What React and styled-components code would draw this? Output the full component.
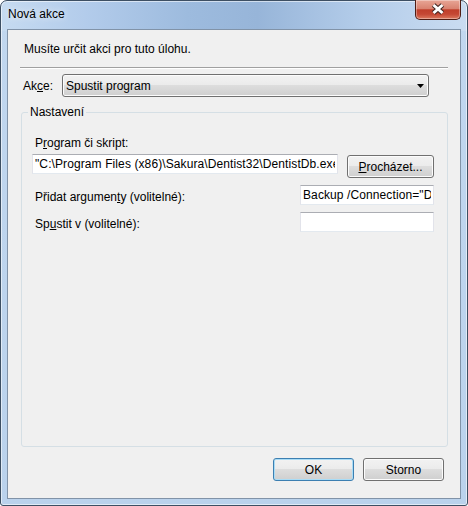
import React from 'react';
import styled, { createGlobalStyle } from 'styled-components';

const GlobalStyle = createGlobalStyle`
  html, body {
    margin: 0;
    padding: 0;
    background: #fff;
  }

  body {
    font-family: "Liberation Sans", Arial, sans-serif;
    font-size: 12px;
    color: #000;
  }
`;

const Window = styled.div`
  box-sizing: border-box;
  width: 468px;
  height: 506px;
  display: flex;
  flex-direction: column;
  padding: 0 6px 6px;
  border: 1px solid #3d4f63;
  border-radius: 7px 7px 3px 3px;
  background:
    linear-gradient(to right, #c6dbf1 0%, #b3cceb 18%, #9dbbde 40%, #97b5d9 55%, #b4cdea 78%, #cadcf1 100%) top / 100% 30px no-repeat,
    linear-gradient(to bottom, #c1d7ef, #bad2ec);
  box-shadow: inset 0 0 0 1px rgba(255, 255, 255, 0.55);
`;

const TitleBar = styled.div`
  height: 28px;
  flex: 0 0 28px;
  display: flex;
  justify-content: space-between;
  align-items: flex-start;
`;

const Caption = styled.div`
  padding: 6px 0 0 1px;
  line-height: 15px;
  text-shadow: 0 0 6px rgba(255, 255, 255, 0.9);
`;

const CloseButton = styled.div`
  box-sizing: border-box;
  width: 46px;
  height: 20px;
  margin-top: -1px;
  border: 1px solid #4f1d14;
  border-top: none;
  border-radius: 0 0 5px 5px;
  background: linear-gradient(to bottom, #e8a696 0%, #d98371 45%, #c03f2b 52%, #c54834 75%, #dc7a5f 100%);
  box-shadow: inset 0 0 0 1px rgba(255, 255, 255, 0.35);

  svg {
    display: block;
  }
`;

const Client = styled.div`
  box-sizing: border-box;
  flex: 1;
  display: flex;
  flex-direction: column;
  padding: 12px 12px 17px;
  border: 1px solid #8193a8;
  background: #f0f0f0;
`;

const Instruction = styled.div`
  margin-left: 4px;
  line-height: 15px;
`;

const Separator = styled.div`
  margin-top: 10px;
  border-top: 1px solid #a0a0a0;
  border-bottom: 1px solid #fff;
`;

const AkceRow = styled.div`
  display: flex;
  align-items: center;
  margin-top: 5px;
  padding-left: 3px;
`;

const AkceLabel = styled.span`
  flex: 0 0 39px;
`;

const ComboBox = styled.div`
  box-sizing: border-box;
  width: 367px;
  height: 23px;
  display: flex;
  align-items: center;
  justify-content: space-between;
  padding: 0 4px 0 3px;
  border: 1px solid #707070;
  border-radius: 3px;
  background: linear-gradient(to bottom, #f2f2f2 0%, #ebebeb 49%, #dddddd 50%, #cfcfcf 100%);
  box-shadow: inset 0 0 0 1px #fcfcfc;
`;

const GroupBox = styled.fieldset`
  flex: 1;
  min-height: 0;
  margin: 7px 0 0 1px;
  padding: 0;
  border: 1px solid #d5dfe5;
  border-radius: 3px;
`;

const Legend = styled.legend`
  margin-left: 6px;
  padding: 0 2px;
  line-height: 16px;
`;

const GroupBody = styled.div`
  display: flex;
  flex-direction: column;
  padding: 16px 13px 0 10px;
`;

const FieldLabel = styled.span`
  margin: ${(p) => p.$drop || 0}px 0 0 3px;
  line-height: 15px;
`;

const FieldRow = styled.div`
  display: flex;
  align-items: flex-start;
  justify-content: space-between;
  margin-top: ${(p) => p.$gap}px;
`;

const TextBox = styled.input`
  box-sizing: border-box;
  width: ${(p) => p.$width}px;
  height: 20px;
  margin: 0;
  padding: 0 2px;
  border: 1px solid #e2e3ea;
  border-top-color: #abadb3;
  border-bottom-color: #e3e9ef;
  background: #fff;
  font: inherit;
  letter-spacing: 0.1px;
  color: #000;
  outline: none;
`;

const PushButton = styled.div`
  box-sizing: border-box;
  width: ${(p) => p.$width}px;
  height: 23px;
  margin-top: ${(p) => p.$offset || 0}px;
  display: flex;
  align-items: center;
  justify-content: center;
  border: 1px solid ${(p) => (p.$default ? '#3c7fb1' : '#707070')};
  border-radius: 3px;
  background: linear-gradient(to bottom, #f2f2f2 0%, #ebebeb 49%, #dddddd 50%, #cfcfcf 100%);
  box-shadow: inset 0 0 0 1px ${(p) => (p.$default ? '#a9dcf6' : '#fcfcfc')};
`;

const ButtonBar = styled.div`
  display: flex;
  justify-content: flex-end;
  gap: 9px;
  margin-top: 11px;
  padding-right: 4px;
`;

const Key = styled.span`
  text-decoration: underline;
`;

function CloseGlyph() {
  return (
    <svg width="44" height="19" viewBox="0 0 44 19">
      <path d="M17.5 5 L26.5 13 M26.5 5 L17.5 13" stroke="#3f2420" strokeWidth="5" fill="none" />
      <path d="M17.5 5 L26.5 13 M26.5 5 L17.5 13" stroke="#fff" strokeWidth="3" fill="none" />
    </svg>
  );
}

function ComboArrow() {
  return (
    <svg width="7" height="4" viewBox="0 0 7 4">
      <path d="M0 0 H7 L3.5 4 Z" fill="#000" />
    </svg>
  );
}

export default function App() {
  return (
    <>
      <GlobalStyle />
      <Window>
        <TitleBar>
          <Caption>Nová akce</Caption>
          <CloseButton>
            <CloseGlyph />
          </CloseButton>
        </TitleBar>

        <Client>
          <Instruction>Musíte určit akci pro tuto úlohu.</Instruction>
          <Separator />

          <AkceRow>
            <AkceLabel>Ak<Key>c</Key>e:</AkceLabel>
            <ComboBox>
              <span>Spustit program</span>
              <ComboArrow />
            </ComboBox>
          </AkceRow>

          <GroupBox>
            <Legend>Nastavení</Legend>
            <GroupBody>
              <FieldLabel>P<Key>r</Key>ogram či skript:</FieldLabel>
              <FieldRow $gap={3}>
                <TextBox
                  $width={306}
                  readOnly
                  value={'"C:\\Program Files (x86)\\Sakura\\Dentist32\\DentistDb.exe"'}
                />
                <PushButton $width={87} $offset={1}>
                  <span><Key>P</Key>rocházet...</span>
                </PushButton>
              </FieldRow>

              <FieldRow $gap={7}>
                <FieldLabel $drop={5}>Přidat argumen<Key>t</Key>y (volitelné):</FieldLabel>
                <TextBox $width={134} readOnly value={'Backup /Connection="DentistDb"'} />
              </FieldRow>

              <FieldRow $gap={7}>
                <FieldLabel $drop={5}>Sp<Key>u</Key>stit v (volitelné):</FieldLabel>
                <TextBox $width={134} readOnly value="" />
              </FieldRow>
            </GroupBody>
          </GroupBox>

          <ButtonBar>
            <PushButton $width={81} $default>OK</PushButton>
            <PushButton $width={81}>Storno</PushButton>
          </ButtonBar>
        </Client>
      </Window>
    </>
  );
}
